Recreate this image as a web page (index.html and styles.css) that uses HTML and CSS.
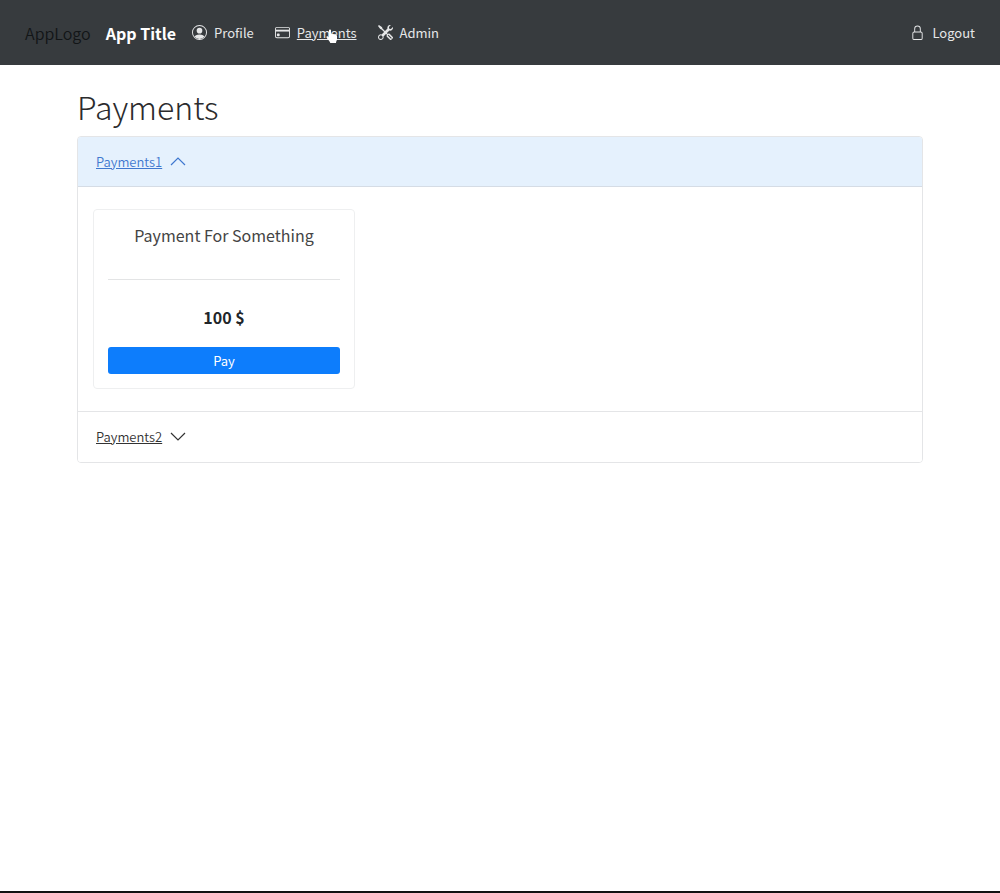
FILE: index.html
```html
<!DOCTYPE html>
<html lang="en">
<head>
<meta charset="utf-8">
<meta name="viewport" content="width=device-width, initial-scale=1">
<title>Payments</title>
<link rel="stylesheet" href="styles.css">
</head>
<body>
<header class="navbar">
  <span class="logo">AppLogo</span>
  <a class="brand" href="#">App Title</a>
  <nav class="nav">
    <a class="nav-link" href="#">
      <svg class="icon" viewBox="0 0 16 16" aria-hidden="true"><path d="M13.468 12.37C12.758 11.226 11.195 10 8 10s-4.757 1.225-5.468 2.37A6.987 6.987 0 0 0 8 15a6.987 6.987 0 0 0 5.468-2.63z"/><path fill-rule="evenodd" d="M8 9a3 3 0 1 0 0-6 3 3 0 0 0 0 6z"/><path fill-rule="evenodd" d="M8 1a7 7 0 1 0 0 14A7 7 0 0 0 8 1zM0 8a8 8 0 1 1 16 0A8 8 0 0 1 0 8z"/></svg>
      <span>Profile</span>
    </a>
    <a class="nav-link active" href="#">
      <svg class="icon" viewBox="0 0 16 16" aria-hidden="true"><path fill-rule="evenodd" d="M14 3H2a1 1 0 0 0-1 1v8a1 1 0 0 0 1 1h12a1 1 0 0 0 1-1V4a1 1 0 0 0-1-1zM2 2a2 2 0 0 0-2 2v8a2 2 0 0 0 2 2h12a2 2 0 0 0 2-2V4a2 2 0 0 0-2-2H2z"/><rect width="3" height="3" x="2" y="9" rx="1"/><path d="M1 5h14v2H1z"/></svg>
      <span class="nav-text">Payments</span>
      <svg class="cursor" viewBox="0 0 12 15" aria-hidden="true"><path d="M3 1.4C3 .2 5 .2 5 1.4V5c.7-.5 1.700-.4 2 .4.7-.4 1.500-.2 1.800.5.8-.3 2.200 0 2.200 1.300V10c0 1.500-1 2.300-1 4H4.300C4 12.300 1.500 10.500.5 8.500.1 7.500 1.500 6.900 2.200 7.700L3 8.500z"/></svg>
    </a>
    <a class="nav-link" href="#">
      <svg class="icon" viewBox="0 0 16 16" aria-hidden="true"><path fill-rule="evenodd" d="M0 1l1-1 3.081 2.200a1 1 0 0 1 .419.815v.07a1 1 0 0 0 .293.708L10.500 9.500l.914-.305a1 1 0 0 1 1.023.242l3.356 3.356a1 1 0 0 1 0 1.414l-1.586 1.586a1 1 0 0 1-1.414 0l-3.356-3.356a1 1 0 0 1-.242-1.023L9.500 10.500 3.793 4.793a1 1 0 0 0-.707-.293h-.071a1 1 0 0 1-.814-.419L0 1zm11.354 9.646a.5.5 0 0 0-.708.708l3 3a.5.5 0 0 0 .708-.708l-3-3z"/><path fill-rule="evenodd" d="M15.898 2.223a3.003 3.003 0 0 1-3.679 3.674L5.878 12.150a3 3 0 1 1-2.027-2.027l6.252-6.341A3 3 0 0 1 13.778.1l-2.142 2.142L12 4l1.757.364 2.141-2.141zm-13.370 9.019L3.001 11l.471.242.529.026.287.445.445.287.026.529L5 13l-.242.471-.026.529-.445.287-.287.445-.529.026L3 15l-.471-.242L2 14.732l-.287-.445L1.268 14l-.026-.529L1 13l.242-.471.026-.529.445-.287.287-.445.529-.026z"/></svg>
      <span>Admin</span>
    </a>
  </nav>
  <a class="nav-link logout" href="#">
    <svg class="icon" viewBox="0 0 16 16" aria-hidden="true"><path fill-rule="evenodd" d="M11.500 8h-7a1 1 0 0 0-1 1v5a1 1 0 0 0 1 1h7a1 1 0 0 0 1-1V9a1 1 0 0 0-1-1zm-7-1a2 2 0 0 0-2 2v5a2 2 0 0 0 2 2h7a2 2 0 0 0 2-2V9a2 2 0 0 0-2-2h-7zm0-3a3.500 3.500 0 1 1 7 0v3h-1V4a2.500 2.500 0 0 0-5 0v3h-1V4z"/></svg>
    <span>Logout</span>
  </a>
</header>
<main class="container">
  <h1 class="title">Payments</h1>
  <div class="accordion">
    <section>
      <button class="toggle open" type="button" aria-expanded="true" aria-controls="group-one">
        <span class="toggle-text">Payments1</span>
        <svg class="icon" viewBox="0 0 16 16" aria-hidden="true"><path class="chevron" d="M1 11l7-7 7 7"/></svg>
      </button>
      <div class="panel" id="group-one">
        <article class="card">
          <h2 class="card-title">Payment For Something</h2>
          <hr class="rule">
          <p class="price">100 $</p>
          <button class="pay" type="button">Pay</button>
        </article>
      </div>
    </section>
    <section class="group">
      <button class="toggle" type="button" aria-expanded="false">
        <span class="toggle-text">Payments2</span>
        <svg class="icon" viewBox="0 0 16 16" aria-hidden="true"><path class="chevron" d="M1 4l7 7 7-7"/></svg>
      </button>
    </section>
  </div>
</main>
</body>
</html>
```
FILE: styles.css
```css
* {
  box-sizing: border-box;
}

body {
  margin: 0;
  min-height: 100vh;
  border-bottom: 2px solid #111;
  background: #fff;
  color: #212529;
  font-family: "Noto Sans CJK JP", "Noto Sans", sans-serif;
  font-size: 13px;
  line-height: 20px;
}

button {
  border: 0;
  font: inherit;
  cursor: pointer;
}

.navbar {
  display: flex;
  align-items: center;
  min-height: 65px;
  padding: 0 25px;
  background: #373b3e;
}

.logo {
  margin-right: 15px;
  color: #121517;
  font-size: 16px;
  font-weight: 350;
}

.brand {
  margin-right: 16px;
  color: #fff;
  font-size: 16px;
  font-weight: 700;
  text-decoration: none;
}

.nav {
  display: flex;
  gap: 21px;
}

.nav-link {
  position: relative;
  display: flex;
  align-items: center;
  gap: 7px;
  color: #e6e7e8;
  text-decoration: none;
}

.active .nav-text {
  text-decoration: underline;
}

.logout {
  margin-left: auto;
}

.icon {
  width: 15px;
  height: 15px;
  fill: currentColor;
}

.cursor {
  position: absolute;
  top: 6px;
  left: 51px;
  width: 12px;
  height: 15px;
  fill: #fff;
}

.container {
  width: 85%;
  margin: 0 auto;
  padding: 21px 2px;
}

.title {
  margin: 0 0 10px;
  color: #2b2b2d;
  font-size: 32px;
  font-weight: 300;
  line-height: 40px;
}

.accordion {
  overflow: hidden;
  border: 1px solid #e4e5e7;
  border-radius: 4px;
}

.toggle {
  display: flex;
  align-items: center;
  gap: 8px;
  width: 100%;
  padding: 15px 18px;
  background: #fff;
  color: #333;
  font-weight: 350;
}

.toggle .icon {
  width: 16px;
  height: 16px;
}

.toggle.open {
  padding-bottom: 14px;
  border-bottom: 1px solid #d5dce5;
  background: #e5f1fd;
  color: #3f78cf;
}

.toggle-text {
  text-decoration: underline;
}

.chevron {
  fill: none;
  stroke: currentColor;
  stroke-width: 1.2;
}

.group {
  border-top: 1px solid #e4e5e7;
}

.panel {
  padding: 22px 15px;
}

.card {
  width: 262px;
  max-width: 100%;
  padding: 13px 14px 14px;
  border: 1px solid #eeeff0;
  border-radius: 4px;
  text-align: center;
}

.card-title {
  margin: 0;
  color: #444;
  font-size: 16px;
  font-weight: 400;
  line-height: 24px;
}

.rule {
  margin: 32px 0 25px;
  border: 0;
  border-top: 1px solid #e3e4e5;
}

.price {
  margin: 0 0 18px;
  font-size: 16px;
  font-weight: 700;
  line-height: 24px;
}

.pay {
  display: block;
  width: 100%;
  padding: 4px 3px 3px;
  border-radius: 3px;
  background: #0d7dfc;
  color: #fff;
}
```
